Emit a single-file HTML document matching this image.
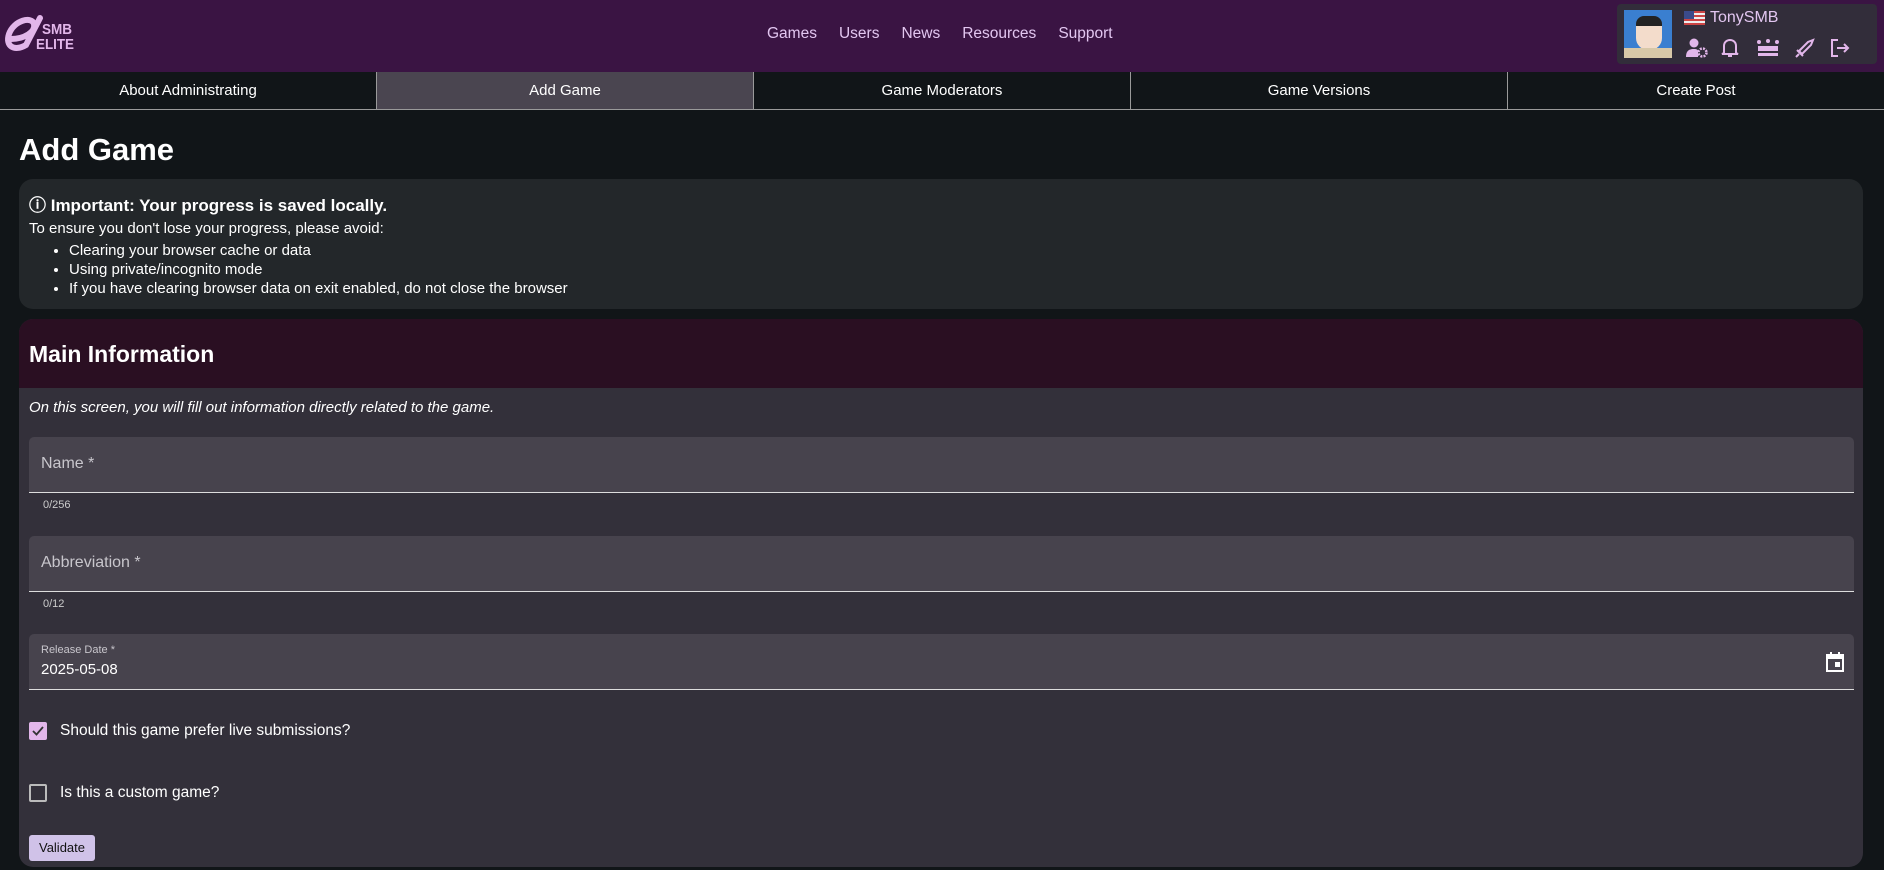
<!DOCTYPE html>
<html><head><meta charset="utf-8"><style>
*{box-sizing:border-box;margin:0;padding:0}
body{width:1884px;height:870px;overflow:hidden;background:#111518;font-family:"Liberation Sans",sans-serif;color:#fff;position:relative}
.hdr{position:absolute;left:0;top:0;width:1884px;height:72px;background:#3a1443}
.nav{position:absolute;top:25px;left:767px;font-size:15.5px;color:#e2c6f0}
.nav span{margin-right:22px}
.prof{position:absolute;left:1617px;top:4px;width:260px;height:60px;background:#322d3a;border-radius:4px}
.tabs{position:absolute;top:72px;left:0;width:1884px;height:38px;display:flex;border-bottom:1px solid #9a9a9a}
.tabs div{flex:1;text-align:center;font-size:15px;line-height:37px;border-right:1px solid #9a9a9a}
.tabs div:last-child{border-right:none}
.tabs .act{background:#4a4550}
h1{position:absolute;left:19px;top:132px;font-size:31px;font-weight:bold}
.info{position:absolute;left:19px;top:179px;width:1844px;height:130px;background:#23272a;border-radius:14px;padding:12px 10px;font-size:15px}
.info b{font-size:17px;display:block;margin-bottom:4px}
.info ul{margin-left:40px;margin-top:4px;line-height:19px}
.card{position:absolute;left:19px;top:319px;width:1844px;height:548px;background:#33303a;border-radius:14px;overflow:hidden}
.ch{height:69px;background:#2a0f22;padding:22px 10px;font-size:23px;font-weight:bold}
.it{position:absolute;left:10px;top:80px;font-style:italic;font-size:15px}
.f{position:absolute;left:10px;width:1825px;height:56px;background:#47434d;border-radius:5px 5px 0 0;border-bottom:1.5px solid #ddd;padding:18px 12px;font-size:16px;color:#c8c6cc}
.cnt{position:absolute;left:24px;font-size:11px;color:#ccc}
.cb{position:absolute;left:10px;width:18px;height:18px;border:2px solid #bbb;border-radius:2px}
.lbl{position:absolute;left:41px;font-size:15.5px}
.btn{position:absolute;left:10px;top:516px;width:66px;height:26px;background:#d0c2e8;color:#111;border-radius:3px;font-size:13px;text-align:center;line-height:26px}
.ic{position:absolute;top:34px}
</style></head><body>
<div class="hdr">
<svg style="position:absolute;left:2px;top:12px" width="95" height="45" viewBox="0 0 95 45"><path d="M9 27 C22 27 34 20 32 12 C30 4 12 8 7 22 C3 34 12 40 24 33 L38 6" fill="none" stroke="#e2b6ea" stroke-width="6" stroke-linecap="round"/><text x="40" y="22" font-size="15" font-weight="bold" fill="#e2b6ea" font-family="Liberation Sans" textLength="30" lengthAdjust="spacingAndGlyphs">SMB</text><text x="34" y="37" font-size="15" font-weight="bold" fill="#e2b6ea" font-family="Liberation Sans" textLength="38" lengthAdjust="spacingAndGlyphs">ELITE</text></svg>
<div class="nav"><span>Games</span><span>Users</span><span>News</span><span>Resources</span><span>Support</span></div>
<div class="prof">
<div style="position:absolute;left:7px;top:6px;width:48px;height:48px;background:#3a7fd0"><div style="position:absolute;left:12px;top:6px;width:26px;height:34px;background:#f3dccb;border-radius:8px 8px 12px 12px;border-top:10px solid #222"></div><div style="position:absolute;left:0;top:38px;width:48px;height:10px;background:#d8c8a8"></div></div>
<div style="position:absolute;left:67px;top:7px;width:21px;height:14px;background:repeating-linear-gradient(#c44 0 2px,#eee 2px 4px)"><div style="width:10px;height:8px;background:#3b4a8a"></div></div>
<div style="position:absolute;left:93px;top:5px;font-size:16px;color:#e2c6f0">TonySMB</div>
<svg class="ic" style="left:69px" width="22" height="20" viewBox="0 0 22 20" fill="#e2b6ea"><circle cx="8" cy="5" r="4.5"/><path d="M0 19 C0 12 4 11 8 11 C11 11 12 12 12 13 L12 19Z"/><circle cx="16.5" cy="14.5" r="4" fill="none" stroke="#e2b6ea" stroke-width="2.5" stroke-dasharray="2 1.2"/></svg>
<svg class="ic" style="left:104px" width="18" height="20" viewBox="0 0 18 20" fill="none" stroke="#e2b6ea" stroke-width="2"><path d="M3 15 L3 8 C3 4 6 2 9 2 C12 2 15 4 15 8 L15 15 L17 16 L1 16 Z"/><path d="M7 18 L11 18"/></svg>
<svg class="ic" style="left:140px" width="22" height="20" viewBox="0 0 22 20" fill="#e2b6ea"><circle cx="2" cy="4" r="2"/><circle cx="11" cy="3" r="2"/><circle cx="20" cy="4" r="2"/><path d="M1 8 L21 8 L21 13 L1 13Z"/><rect x="1" y="15" width="20" height="3"/></svg>
<svg class="ic" style="left:178px" width="20" height="20" viewBox="0 0 20 20" fill="none" stroke="#e2b6ea" stroke-width="2"><path d="M18 2 L16 7 L7 16 L4 13 L13 4 Z"/><path d="M2 12 L8 18 M1 19 L4 16"/></svg>
<svg class="ic" style="left:213px" width="20" height="20" viewBox="0 0 20 20" fill="none" stroke="#e2b6ea" stroke-width="2"><path d="M8 2 L2 2 L2 18 L8 18"/><path d="M7 10 L18 10 M14 6 L18 10 L14 14"/></svg>
</div>
</div>
<div class="tabs"><div>About Administrating</div><div class="act">Add Game</div><div>Game Moderators</div><div>Game Versions</div><div>Create Post</div></div>
<h1>Add Game</h1>
<div class="info"><b>ⓘ Important: Your progress is saved locally.</b>To ensure you don't lose your progress, please avoid:<ul><li>Clearing your browser cache or data</li><li>Using private/incognito mode</li><li>If you have clearing browser data on exit enabled, do not close the browser</li></ul></div>
<div class="card">
<div class="ch">Main Information</div>
<div class="it">On this screen, you will fill out information directly related to the game.</div>
<div class="f" style="top:118px">Name *</div><div class="cnt" style="top:180px">0/256</div>
<div class="f" style="top:217px">Abbreviation *</div><div class="cnt" style="top:279px">0/12</div>
<div class="f" style="top:315px;padding:10px 12px"><div style="font-size:11px">Release Date *</div><div style="color:#fff;font-size:15px;margin-top:5px">2025-05-08</div>
<svg style="position:absolute;right:10px;top:18px" width="18" height="20" viewBox="0 0 18 20"><rect x="1" y="3" width="16" height="16" fill="none" stroke="#fff" stroke-width="2"/><rect x="1" y="3" width="16" height="4" fill="#fff"/><rect x="4" y="0" width="2" height="4" fill="#fff"/><rect x="12" y="0" width="2" height="4" fill="#fff"/><rect x="9" y="10" width="5" height="5" fill="#fff"/></svg></div>
<div class="cb" style="top:403px;background:#e2b6ea;border-color:#e2b6ea"><svg width="14" height="14" viewBox="0 0 14 14"><path d="M2 7 L5.5 10.5 L12 3" fill="none" stroke="#333" stroke-width="1.8"/></svg></div>
<div class="lbl" style="top:403px">Should this game prefer live submissions?</div>
<div class="cb" style="top:465px"></div>
<div class="lbl" style="top:465px">Is this a custom game?</div>
<div class="btn">Validate</div>
</div>
</body></html>
